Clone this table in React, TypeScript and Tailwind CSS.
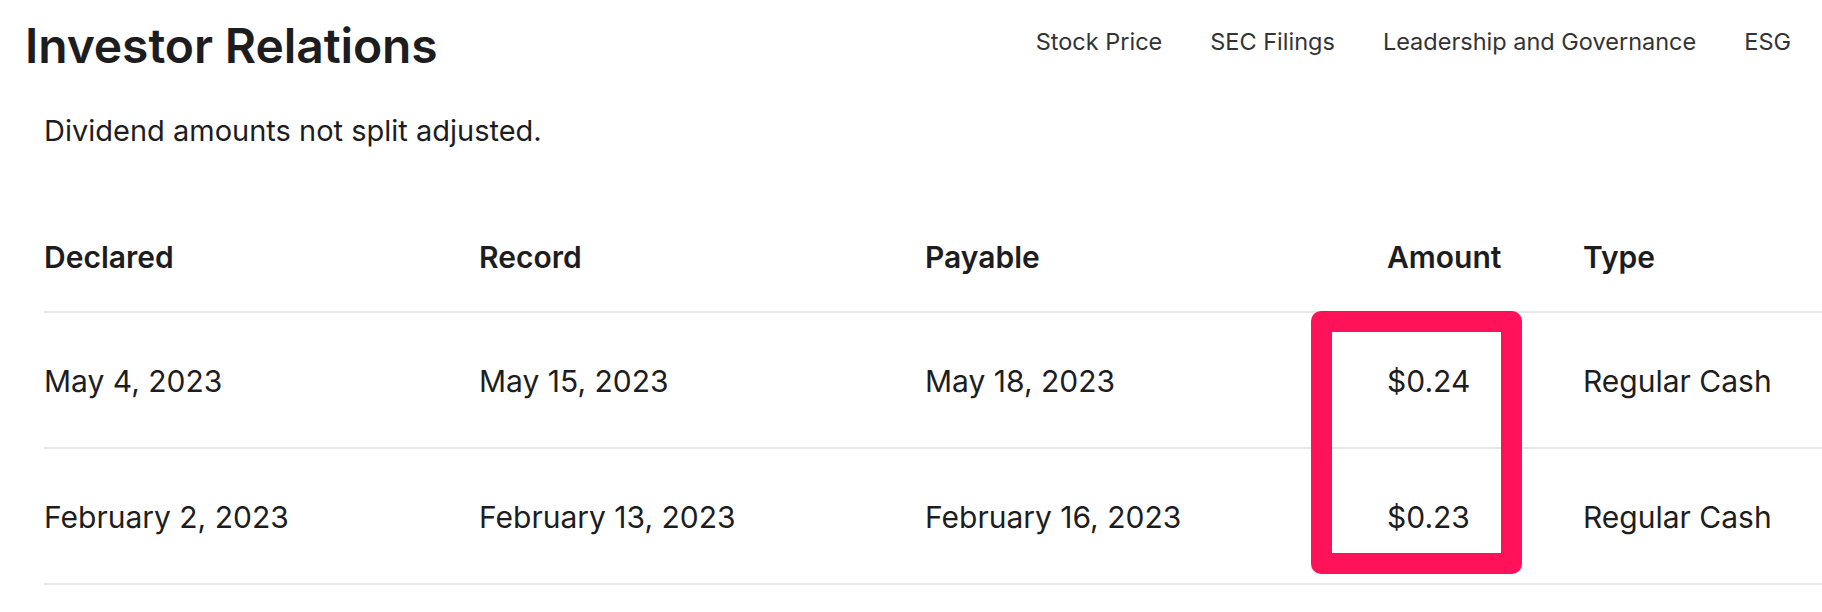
import React from "react";

const rows = [
  { declared: "May 4, 2023", record: "May 15, 2023", payable: "May 18, 2023", amount: "$0.24", type: "Regular Cash" },
  { declared: "February 2, 2023", record: "February 13, 2023", payable: "February 16, 2023", amount: "$0.23", type: "Regular Cash" },
];

const cols = "grid grid-cols-[435px_446px_462px_196px_1fr]";

export default function App() {
  return (
    <div
      className="w-[1822px] h-[612px] bg-white text-[#1d1d1f] overflow-hidden"
      style={{ fontFamily: "Inter, 'Noto Sans', 'Liberation Sans', sans-serif" }}
    >
      <header className="flex h-[90px] items-start justify-between">
        <h1 className="pl-[25px] pt-[22px] text-[48px] leading-[48px] font-semibold tracking-[-0.1px]">
          Investor Relations
        </h1>
        <nav className="flex gap-[48px] pr-[31px] pt-[30px] text-[23.5px] leading-[24px] text-[#333336]">
          <a>Stock Price</a>
          <a>SEC Filings</a>
          <a>Leadership and Governance</a>
          <a>ESG</a>
        </nav>
      </header>

      <main className="pl-[44px]">
        <p className="pt-[26px] text-[29px] leading-[29px]">Dividend amounts not split adjusted.</p>

        <div className="relative mt-[58px]">
          <div className={`${cols} h-[110px] items-center border-b-2 border-[#e6e6e6] text-[30px] font-semibold`}>
            <div>Declared</div>
            <div>Record</div>
            <div>Payable</div>
            <div>Amount</div>
            <div>Type</div>
          </div>
          {rows.map((r) => (
            <div
              key={r.declared}
              className={`${cols} h-[136px] items-center border-b-2 border-[#e6e6e6] text-[30px]`}
            >
              <div className="pt-[3px]">{r.declared}</div>
              <div className="pt-[3px]">{r.record}</div>
              <div className="pt-[3px]">{r.payable}</div>
              <div className="pt-[3px]">{r.amount}</div>
              <div className="pt-[3px]">{r.type}</div>
            </div>
          ))}
          <div className="pointer-events-none absolute left-[1267px] top-[108px] h-[263px] w-[211px] rounded-[10px] border-[21px] border-[#ff1259]" />
        </div>
      </main>
    </div>
  );
}
